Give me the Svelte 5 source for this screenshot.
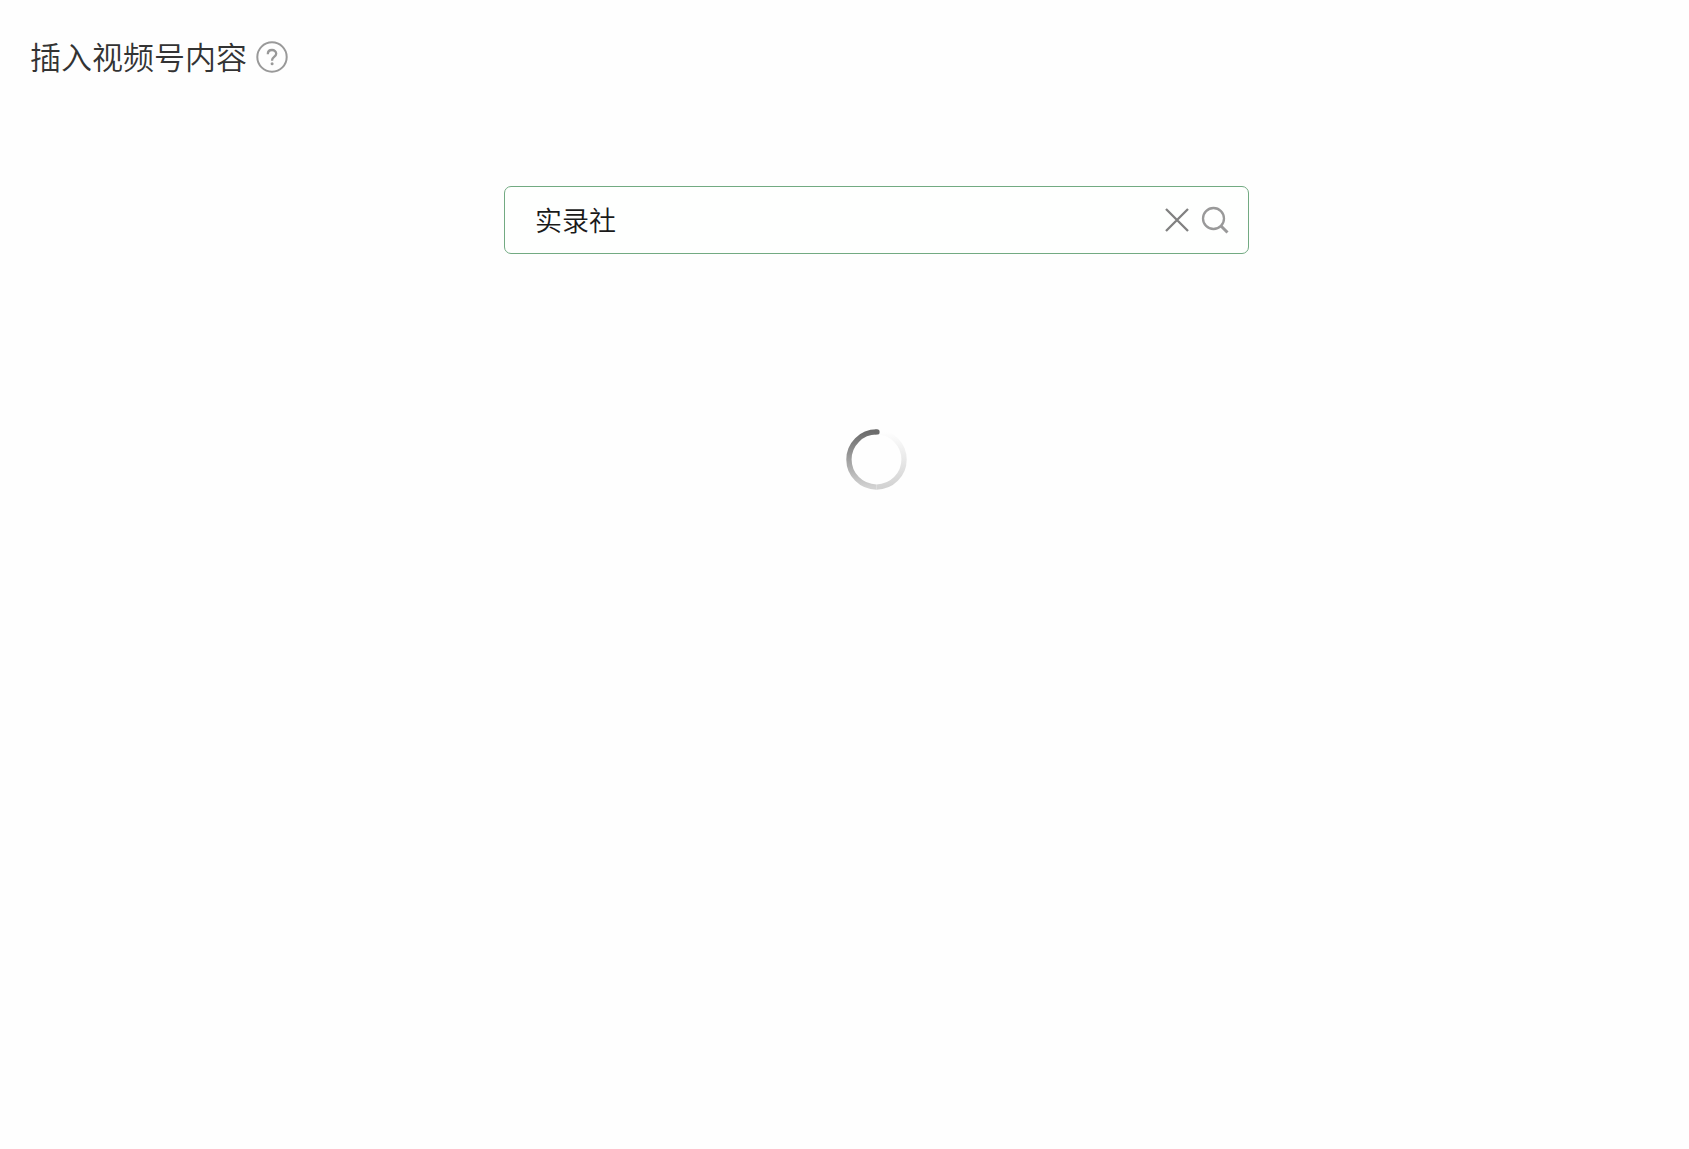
<script>
  let query = $state('实录社');
</script>

<main class="page">
  <header class="header">
    <h1>插入视频号内容</h1>
    <button class="icon-button" type="button" aria-label="帮助">
      <svg width="32" height="32" viewBox="0 0 32 32" fill="none" stroke="#999" stroke-width="2">
        <circle cx="16" cy="16" r="14.7" />
        <path d="M11.8 13.2c0-2.6 1.8-4.2 4.2-4.2s4.2 1.6 4.2 3.8c0 3-4.1 3.3-4.1 6.2v.8" stroke-width="2.3" />
        <circle cx="16.1" cy="22.8" r="1.5" fill="#999" stroke="none" />
      </svg>
    </button>
  </header>

  <section class="content">
    <form class="search" onsubmit={(e) => e.preventDefault()}>
      <input type="text" aria-label="搜索视频号" bind:value={query} />
      <button class="icon-button" type="button" aria-label="清除" onclick={() => (query = '')}>
        <svg width="24" height="24" viewBox="0 0 24 24" fill="none" stroke="#808080" stroke-width="2.3">
          <path d="M1 1l22 22M23 1L1 23" />
        </svg>
      </button>
      <button class="icon-button" type="submit" aria-label="搜索">
        <svg width="28" height="28" viewBox="0 0 28 28" fill="none" stroke="#999" stroke-width="2.3">
          <circle cx="12.5" cy="12.5" r="10.5" />
          <path d="M19.5 19.5l7 7" stroke-width="3" />
        </svg>
      </button>
    </form>

    <div class="spinner" role="status" aria-label="加载中">
      <svg width="61" height="61" viewBox="0 0 62 62" fill="none" stroke-width="5.4">
        <defs>
          <linearGradient id="dark" x1="0" y1="0" x2="0" y2="1">
            <stop offset="0" stop-color="#6c6c6c" />
            <stop offset="1" stop-color="#d2d2d2" />
          </linearGradient>
          <linearGradient id="light" x1="0" y1="0" x2="0" y2="1">
            <stop offset="0" stop-color="#fefefe" />
            <stop offset="1" stop-color="#d2d2d2" />
          </linearGradient>
        </defs>
        <path d="M31 3a28 28 0 0 1 0 56" stroke="url(#light)" />
        <path d="M31 3a28 28 0 0 0 0 56" stroke="url(#dark)" />
        <circle cx="31.5" cy="3" r="2.7" fill="#6c6c6c" />
      </svg>
    </div>
  </section>
</main>

<style>
  :global(body) {
    margin: 0;
    background: #fefefe;
  }
  .page {
    font-family: "Noto Sans CJK SC", sans-serif;
    font-weight: 350;
    color: #333;
  }
  .header {
    display: flex;
    align-items: center;
    gap: 9px;
    padding: 36px 30px 0;
  }
  h1 {
    margin: 0;
    padding-bottom: 2px;
    font-size: 31px;
    line-height: 40px;
    font-weight: 350;
  }
  .icon-button {
    display: flex;
    padding: 0;
    border: 0;
    background: none;
    cursor: pointer;
  }
  .content {
    display: flex;
    flex-direction: column;
    align-items: center;
    padding: 108px 0 32px 64px;
  }
  .search {
    display: flex;
    align-items: center;
    gap: 12px;
    box-sizing: border-box;
    width: 100%;
    max-width: 745px;
    height: 68px;
    padding: 0 19px 0 30px;
    border: 1px solid #72aa82;
    border-radius: 7px;
    background: #fefffe;
  }
  input {
    flex: 1;
    min-width: 0;
    padding: 0;
    border: 0;
    outline: 0;
    background: none;
    color: #1a1a1a;
    font: inherit;
    font-size: 27px;
    line-height: 40px;
  }
  .spinner {
    display: flex;
    margin-top: 175px;
  }
</style>
